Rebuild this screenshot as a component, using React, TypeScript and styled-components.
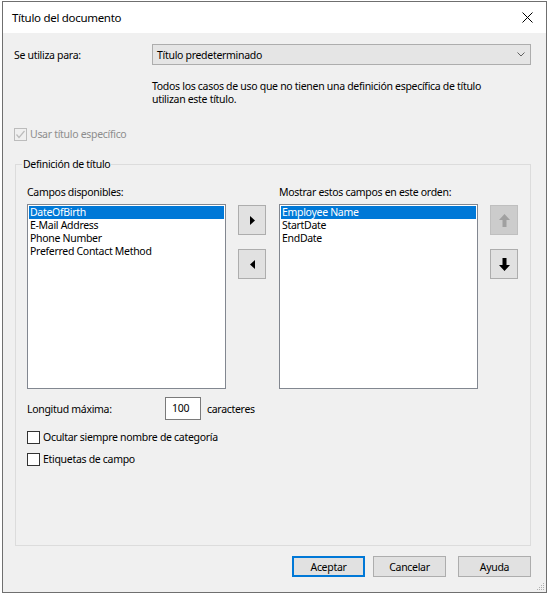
import React from "react"
import styled, { createGlobalStyle, css } from "styled-components"

const GlobalStyle = createGlobalStyle`
  html, body {
    margin: 0;
    padding: 0;
    background: #ffffff;
  }
  body {
    font-family: "Noto Sans", "Segoe UI", sans-serif;
    font-size: 10.5px;
    letter-spacing: -0.3px;
    color: #000000;
  }
`

const Window = styled.div`
  box-sizing: border-box;
  width: 545px;
  height: 592px;
  margin: 1px 0 0 2px;
  border: 1px solid #6f6f6f;
  background: #f0f0f0;
  display: flex;
  flex-direction: column;
  position: relative;
`

const TitleBar = styled.div`
  height: 31px;
  background: #ffffff;
  display: flex;
  align-items: center;
  justify-content: space-between;
  padding-left: 9px;
  font-size: 11.5px;
`

const CloseIcon = styled.svg`
  width: 11px;
  height: 11px;
  margin-right: 13px;
`

const Body = styled.div`
  padding: 11px 0 0 11px;
  display: flex;
  flex-direction: column;
`

const Row = styled.div<{ $top?: number }>`
  display: flex;
  align-items: center;
  margin-top: ${p => p.$top ?? 0}px;
`

const Label = styled.span<{ $width?: number; $disabled?: boolean }>`
  display: inline-block;
  width: ${p => (p.$width ? `${p.$width}px` : "auto")};
  line-height: 16px;
  color: ${p => (p.$disabled ? "#8d8d8d" : "#000")};
  white-space: nowrap;
`

const Combo = styled.div`
  box-sizing: border-box;
  width: 379px;
  height: 21px;
  border: 1px solid #adadad;
  background: #e5e5e5;
  display: flex;
  align-items: center;
  justify-content: space-between;
  padding: 0 5px 0 4px;
`

const Description = styled.div`
  margin: 15px 0 0 138px;
  line-height: 13px;
`

const Box = styled.span<{ $disabled?: boolean }>`
  box-sizing: border-box;
  width: 13px;
  height: 13px;
  border: 1px solid ${p => (p.$disabled ? "#bcbcbc" : "#333333")};
  background: ${p => (p.$disabled ? "#f0f0f0" : "#ffffff")};
  margin-right: 3px;
  display: flex;
  align-items: center;
  justify-content: center;
`

const GroupBox = styled.div`
  position: relative;
  box-sizing: border-box;
  width: 516px;
  height: 382px;
  margin: 22px 0 0 1px;
  border: 1px solid #dcdcdc;
  padding: 19px 0 0 11px;
  display: flex;
  flex-direction: column;
`

const Legend = styled.span`
  position: absolute;
  top: -9px;
  left: 6px;
  padding: 0 1px;
  line-height: 16px;
  background: #f0f0f0;
`

const Lists = styled.div`
  display: grid;
  grid-template-columns: 199px 29px 199px 28px;
  grid-template-rows: 16px 185px;
  column-gap: 12px;
  row-gap: 4px;
`

const ListBox = styled.div`
  box-sizing: border-box;
  border: 1px solid #828790;
  background: #ffffff;
  padding: 1px;
`

const Item = styled.div<{ $selected?: boolean }>`
  height: 13px;
  line-height: 13px;
  padding-left: 1px;
  white-space: nowrap;
  ${p =>
    p.$selected &&
    css`
      background: #0078d7;
      color: #ffffff;
    `}
`

const ButtonStack = styled.div`
  display: flex;
  flex-direction: column;
  gap: 14px;
  padding-top: 1px;
`

const ArrowButton = styled.div<{ $disabled?: boolean }>`
  box-sizing: border-box;
  width: 28px;
  height: 30px;
  border: 1px solid ${p => (p.$disabled ? "#bfbfbf" : "#adadad")};
  background: ${p => (p.$disabled ? "#cccccc" : "#e1e1e1")};
  display: flex;
  align-items: center;
  justify-content: center;
`

const NumberInput = styled.div`
  box-sizing: border-box;
  width: 36px;
  height: 23px;
  border: 1px solid #7a7a7a;
  background: #ffffff;
  padding: 3px 0 0 6px;
  line-height: 14px;
  margin-right: 6px;
`

const Footer = styled.div`
  display: flex;
  justify-content: flex-end;
  margin: 10px 15px 0 0;
`

const Button = styled.div<{ $default?: boolean; $space?: number }>`
  box-sizing: border-box;
  width: 73px;
  height: 21px;
  margin-left: ${p => p.$space ?? 0}px;
  background: #e1e1e1;
  border: ${p => (p.$default ? "2px solid #0078d7" : "1px solid #adadad")};
  display: flex;
  align-items: center;
  justify-content: center;
  line-height: 16px;
`

const Grip = styled.svg`
  position: absolute;
  right: 1px;
  bottom: 1px;
  width: 8px;
  height: 8px;
`

const Tri = ({ dir }: { dir: "left" | "right" }) => (
  <svg width="5" height="9" viewBox="0 0 5 9">
    {dir === "right" ? (
      <polygon points="0,0 5,4.5 0,9" fill="#000" />
    ) : (
      <polygon points="5,0 0,4.5 5,9" fill="#000" />
    )}
  </svg>
)

const Arrow = ({ dir, color }: { dir: "up" | "down"; color: string }) => (
  <svg width="11" height="13" viewBox="0 0 11 13">
    {dir === "up" ? (
      <polygon points="5.5,0 11,6 7.5,6 7.5,13 3.5,13 3.5,6 0,6" fill={color} />
    ) : (
      <polygon points="3.5,0 7.5,0 7.5,7 11,7 5.5,13 0,7 3.5,7" fill={color} />
    )}
  </svg>
)

const Check = ({ color }: { color: string }) => (
  <svg width="11" height="11" viewBox="0 0 11 11">
    <polyline points="1.5,5.5 4,8.5 9.5,2" fill="none" stroke={color} strokeWidth="1.2" />
  </svg>
)

const available = ["DateOfBirth", "E-Mail Address", "Phone Number", "Preferred Contact Method"]
const shown = ["Employee Name", "StartDate", "EndDate"]

export default function App() {
  return (
    <>
      <GlobalStyle />
      <Window>
        <TitleBar>
          <span>Título del documento</span>
          <CloseIcon viewBox="0 0 11 11">
            <path d="M0.5 0.5 L10.5 10.5 M10.5 0.5 L0.5 10.5" stroke="#000" strokeWidth="1" fill="none" />
          </CloseIcon>
        </TitleBar>
        <Body>
          <Row>
            <Label $width={138}>Se utiliza para:</Label>
            <Combo>
              <span>Título predeterminado</span>
              <svg width="8" height="5" viewBox="0 0 8 5">
                <polyline points="0.5,0.5 4,4 7.5,0.5" fill="none" stroke="#606060" strokeWidth="1" />
              </svg>
            </Combo>
          </Row>
          <Description>
            Todos los casos de uso que no tienen una definición específica de título
            <br />
            utilizan este título.
          </Description>
          <Row $top={20}>
            <Box $disabled>
              <Check color="#bcbcbc" />
            </Box>
            <Label $disabled>Usar título específico</Label>
          </Row>
          <GroupBox>
            <Legend>Definición de título</Legend>
            <Lists>
              <Label>Campos disponibles:</Label>
              <span />
              <Label>Mostrar estos campos en este orden:</Label>
              <span />
              <ListBox>
                {available.map((f, i) => (
                  <Item key={f} $selected={i === 0}>
                    {f}
                  </Item>
                ))}
              </ListBox>
              <ButtonStack>
                <ArrowButton>
                  <Tri dir="right" />
                </ArrowButton>
                <ArrowButton>
                  <Tri dir="left" />
                </ArrowButton>
              </ButtonStack>
              <ListBox>
                {shown.map((f, i) => (
                  <Item key={f} $selected={i === 0}>
                    {f}
                  </Item>
                ))}
              </ListBox>
              <ButtonStack>
                <ArrowButton $disabled>
                  <Arrow dir="up" color="#a0a0a0" />
                </ArrowButton>
                <ArrowButton>
                  <Arrow dir="down" color="#000" />
                </ArrowButton>
              </ButtonStack>
            </Lists>
            <Row $top={8}>
              <Label $width={138}>Longitud máxima:</Label>
              <NumberInput>100</NumberInput>
              <Label>caracteres</Label>
            </Row>
            <Row $top={9}>
              <Box />
              <Label>Ocultar siempre nombre de categoría</Label>
            </Row>
            <Row $top={6}>
              <Box />
              <Label>Etiquetas de campo</Label>
            </Row>
          </GroupBox>
          <Footer>
            <Button $default>Aceptar</Button>
            <Button $space={8}>Cancelar</Button>
            <Button $space={12}>Ayuda</Button>
          </Footer>
        </Body>
        <Grip viewBox="0 0 8 8">
          {[
            [6, 0],
            [4, 2],
            [6, 2],
            [2, 4],
            [4, 4],
            [6, 4],
            [0, 6],
            [2, 6],
            [4, 6],
            [6, 6],
          ].map(([x, y]) => (
            <rect key={`${x}-${y}`} x={x} y={y} width="1" height="1" fill="#b0b0b0" />
          ))}
        </Grip>
      </Window>
    </>
  )
}
